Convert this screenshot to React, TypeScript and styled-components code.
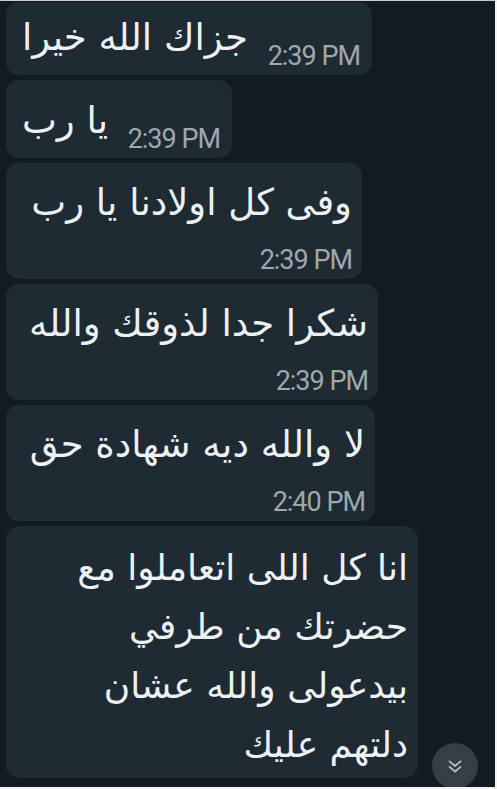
import React from "react";
import styled, { createGlobalStyle } from "styled-components";

const GlobalStyle = createGlobalStyle`
  html, body {
    margin: 0;
    padding: 0;
    background: #121b22;
  }
  * {
    box-sizing: border-box;
  }
`;

const Screen = styled.div`
  position: relative;
  width: 497px;
  height: 789px;
  overflow: hidden;
  background: #121b22;
  border-top: 1px solid #c9cdd0;
  border-right: 2px solid #f4f4f4;
  border-bottom: 2px solid #f4f4f4;
  display: flex;
  flex-direction: column;
  align-items: flex-start;
  gap: 5px;
  padding: 1px 0 0 6px;
`;

const Bubble = styled.div<{ $width: number; $height?: number; $inline?: boolean }>`
  width: ${({ $width }) => $width}px;
  min-height: ${({ $height }) => ($height ? `${$height}px` : "auto")};
  flex-shrink: 0;
  background: #1f2b32;
  border-radius: 13px;
  display: flex;
  flex-direction: ${({ $inline }) => ($inline ? "row" : "column")};
  align-items: ${({ $inline }) => ($inline ? "flex-end" : "stretch")};
  justify-content: ${({ $inline }) => ($inline ? "space-between" : "flex-start")};
  padding: ${({ $inline }) => ($inline ? "8px 12px 9px 16px" : "12px 10px 4px 12px")};
`;

const Text = styled.div<{ $lines?: boolean }>`
  direction: rtl;
  text-align: right;
  font-family: "DejaVu Sans", "Noto Sans", sans-serif;
  font-size: ${({ $lines }) => ($lines ? "36px" : "37px")};
  line-height: ${({ $lines }) => ($lines ? "59px" : "56px")};
  color: #eef1f3;
  white-space: pre;
`;

const Time = styled.div<{ $inline?: boolean }>`
  align-self: flex-end;
  font-family: Roboto, "Liberation Sans", sans-serif;
  font-size: 27px;
  letter-spacing: -1px;
  line-height: 30px;
  color: #9ea8ae;
  margin-top: ${({ $inline }) => ($inline ? "0" : "14px")};
  margin-bottom: ${({ $inline }) => ($inline ? "-5px" : "0")};
`;

const ScrollButton = styled.button`
  position: absolute;
  left: 432px;
  top: 742px;
  width: 46px;
  height: 46px;
  border-radius: 50%;
  border: none;
  padding: 0;
  background: #353e44;
  display: flex;
  align-items: center;
  justify-content: center;
`;

type Msg = { text: string; time: string; width: number; height: number; inline?: boolean };

const messages: Msg[] = [
  { text: "جزاك الله خيرا", time: "2:39 PM", width: 366, height: 73, inline: true },
  { text: "يا رب", time: "2:39 PM", width: 226, height: 78, inline: true },
  { text: "وفى كل اولادنا يا رب", time: "2:39 PM", width: 356, height: 116 },
  { text: "شكرا جدا لذوقك والله", time: "2:39 PM", width: 372, height: 116 },
  { text: "لا والله ديه شهادة حق", time: "2:40 PM", width: 369, height: 116 },
];

const ChevronsDown = () => (
  <svg width="22" height="22" viewBox="0 0 24 24" fill="none" stroke="#b5bcc0" strokeWidth="2" strokeLinecap="round" strokeLinejoin="round">
    <path d="M6 7l6 5 6-5" />
    <path d="M6 13l6 5 6-5" />
  </svg>
);

export default function App() {
  return (
    <>
      <GlobalStyle />
      <Screen>
        {messages.map((m, i) => (
          <Bubble key={i} $width={m.width} $height={m.height} $inline={m.inline}>
            <Text>{m.text}</Text>
            <Time $inline={m.inline}>{m.time}</Time>
          </Bubble>
        ))}
        <Bubble $width={412}>
          <Text $lines>
            {"انا كل اللى اتعاملوا مع\nحضرتك من طرفي\nبيدعولى والله عشان\nدلتهم عليك"}
          </Text>
        </Bubble>
        <ScrollButton aria-label="scroll down">
          <ChevronsDown />
        </ScrollButton>
      </Screen>
    </>
  );
}
